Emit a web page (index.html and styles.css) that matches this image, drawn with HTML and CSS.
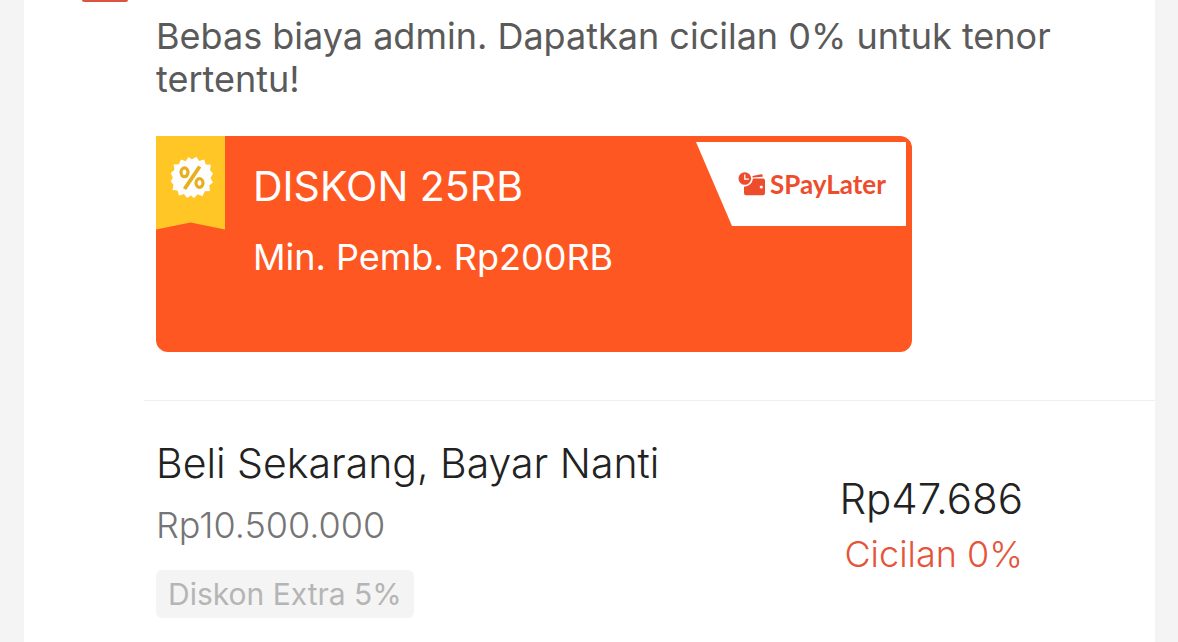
FILE: index.html
```html
<!DOCTYPE html>
<html lang="id" dir="ltr">
  <head>
    <meta charset="utf-8">
    <meta name="viewport" content="width=device-width, initial-scale=1">
    <title>SPayLater</title>
    <link rel="stylesheet" href="styles.css">
  </head>
  <body>
    <main class="card">
      <section class="promo">
        <div class="promo-icon"></div>
        <div class="promo-body">
          <p class="promo-text">Bebas biaya admin. Dapatkan cicilan 0% untuk tenor tertentu!</p>

          <div class="voucher">
            <!-- ribbon with the percent seal -->
            <svg class="ribbon" viewBox="0 0 69 94" aria-hidden="true">
              <path fill="#ffc626" d="M0 0h69v93.500L34.500 86.500 0 93.500z"/>
              <path fill="#fff" d="M35.800 23.500L40.200 20.800L43.200 25.000L48.200 23.400L49.700 28.400L54.900 28.800L54.000 34.200L57.000 37.500L54.500 42.000L57.000 46.500L53.200 49.600L54.000 55.000L48.800 55.300L46.500 60.200L41.700 58.200L38.000 62.000L35.000 59.500L31.000 62.000L28.000 58.000L23.000 59.500L21.500 54.500L16.500 54.000L17.500 48.800L14.800 45.500L16.800 41.500L14.800 37.000L18.500 33.800L17.600 28.600L22.900 28.200L25.000 23.400L29.800 25.200L32.600 21.000z"/>
              <g fill="none" stroke="#e9ae1c">
                <ellipse cx="28.500" cy="36.300" rx="3.500" ry="4.400" stroke-width="3.200"/>
                <ellipse cx="43.500" cy="47" rx="3.500" ry="4.400" stroke-width="3.200"/>
                <path d="M43.700 30.500L28.500 53" stroke-width="3.800"/>
              </g>
            </svg>
            <div class="voucher-info">
              <h2>DISKON 25RB</h2>
              <p>Min. Pemb. Rp200RB</p>
            </div>
            <div class="brand">
              <svg class="brand-icon" viewBox="0 0 28 24" aria-hidden="true">
                <path fill="#ee4d2d" d="M14.500 4L23 2.200q1.400-.3 1.700 1v1.500l-10.200 .8z"/>
                <path fill="#ee4d2d" d="M6 14.800q7.800-.5 9-8.300H25q2 0 2 2v12.700q0 2-2 2H8q-2 0-2-2z"/>
                <circle cx="6.800" cy="6.500" r="6.300" fill="#ee4d2d"/>
                <path fill="none" stroke="#fff" stroke-width="1.300" d="M6.800 2.500v4.700h4"/>
                <circle cx="23.300" cy="15" r="1.600" fill="#fff"/>
              </svg>
              <span>SPayLater</span>
            </div>
          </div>
        </div>
      </section>

      <section class="plan">
        <div class="plan-left">
          <h3>Beli Sekarang, Bayar Nanti</h3>
          <p class="limit">Rp10.500.000</p>
          <span class="tag">Diskon Extra 5%</span>
        </div>
        <div class="plan-right">
          <p class="price">Rp47.686</p>
          <p class="installment">Cicilan 0%</p>
        </div>
      </section>
    </main>
  </body>
</html>
```
FILE: styles.css
```css
* {
  box-sizing: border-box;
}

body {
  margin: 0;
  background-color: #f4f4f4;
  font-family: Inter, "Liberation Sans", sans-serif;
  font-weight: 300;
}

h2, h3, p {
  margin: 0;
}

.card {
  min-height: 100vh;
  margin: 0 23px 0 24px;
  background-color: #fff;
}

.promo {
  display: flex;
  gap: 28px;
  padding: 0 58px 48px;
}

.promo-icon {
  flex: none;
  width: 46px;
  height: 2px;
  background-color: #dc5540;
  border-radius: 0 0 4px 4px;
}

.promo-body {
  flex: 1;
  padding-top: 15px;
}

.promo-text {
  margin-bottom: 35px;
  color: #5a5a5a;
  font-size: 36px;
  font-weight: 400;
  line-height: 43px;
}

/* Voucher */
.voucher {
  display: flex;
  align-items: flex-start;
  max-width: 756px;
  min-height: 216px;
  background-color: #ff5722;
  border-radius: 0 12px 12px 12px;
  color: #fff;
}

.ribbon {
  flex: none;
  width: 69px;
  height: 94px;
}

.voucher-info {
  flex: 1;
  padding: 24px 0 0 28px;
}

.voucher-info h2 {
  margin-bottom: 24px;
  font-size: 41px;
  font-weight: 400;
  line-height: 52px;
}

.voucher-info p {
  font-size: 36px;
  font-weight: 400;
  line-height: 43px;
}

.brand {
  display: flex;
  flex: none;
  align-items: center;
  gap: 4px;
  width: 210px;
  height: 84px;
  margin: 6px 6px 0 0;
  padding-left: 42px;
  background-color: #fff;
  clip-path: polygon(0 0, 100% 0, 100% 100%, 36px 100%);
  color: #ee4d2d;
  font-family: Lato, "Liberation Sans", sans-serif;
  font-size: 26px;
  font-weight: 700;
}

.brand-icon {
  flex: none;
  width: 28px;
  height: 24px;
}

/* Plan row */
.plan {
  display: flex;
  justify-content: space-between;
  align-items: flex-start;
  margin-left: 120px;
  padding: 36px 132px 24px 12px;
  border-top: 1px solid #efefef;
}

.plan-left h3 {
  margin-bottom: 15px;
  color: #222;
  font-size: 41px;
  font-weight: 300;
  line-height: 52px;
}

.limit {
  margin-bottom: 23px;
  color: #757575;
  font-size: 36px;
  line-height: 43px;
}

.tag {
  display: inline-block;
  padding: 0 12px;
  background-color: #f4f4f4;
  border-radius: 6px;
  color: #b5b5b5;
  font-size: 30px;
  font-weight: 400;
  line-height: 48px;
}

.plan-right {
  padding-top: 36px;
  text-align: right;
}

.price {
  margin-bottom: 8px;
  color: #222;
  font-size: 42px;
  line-height: 52px;
}

.installment {
  color: #e4553a;
  font-size: 36px;
  line-height: 43px;
}
```
